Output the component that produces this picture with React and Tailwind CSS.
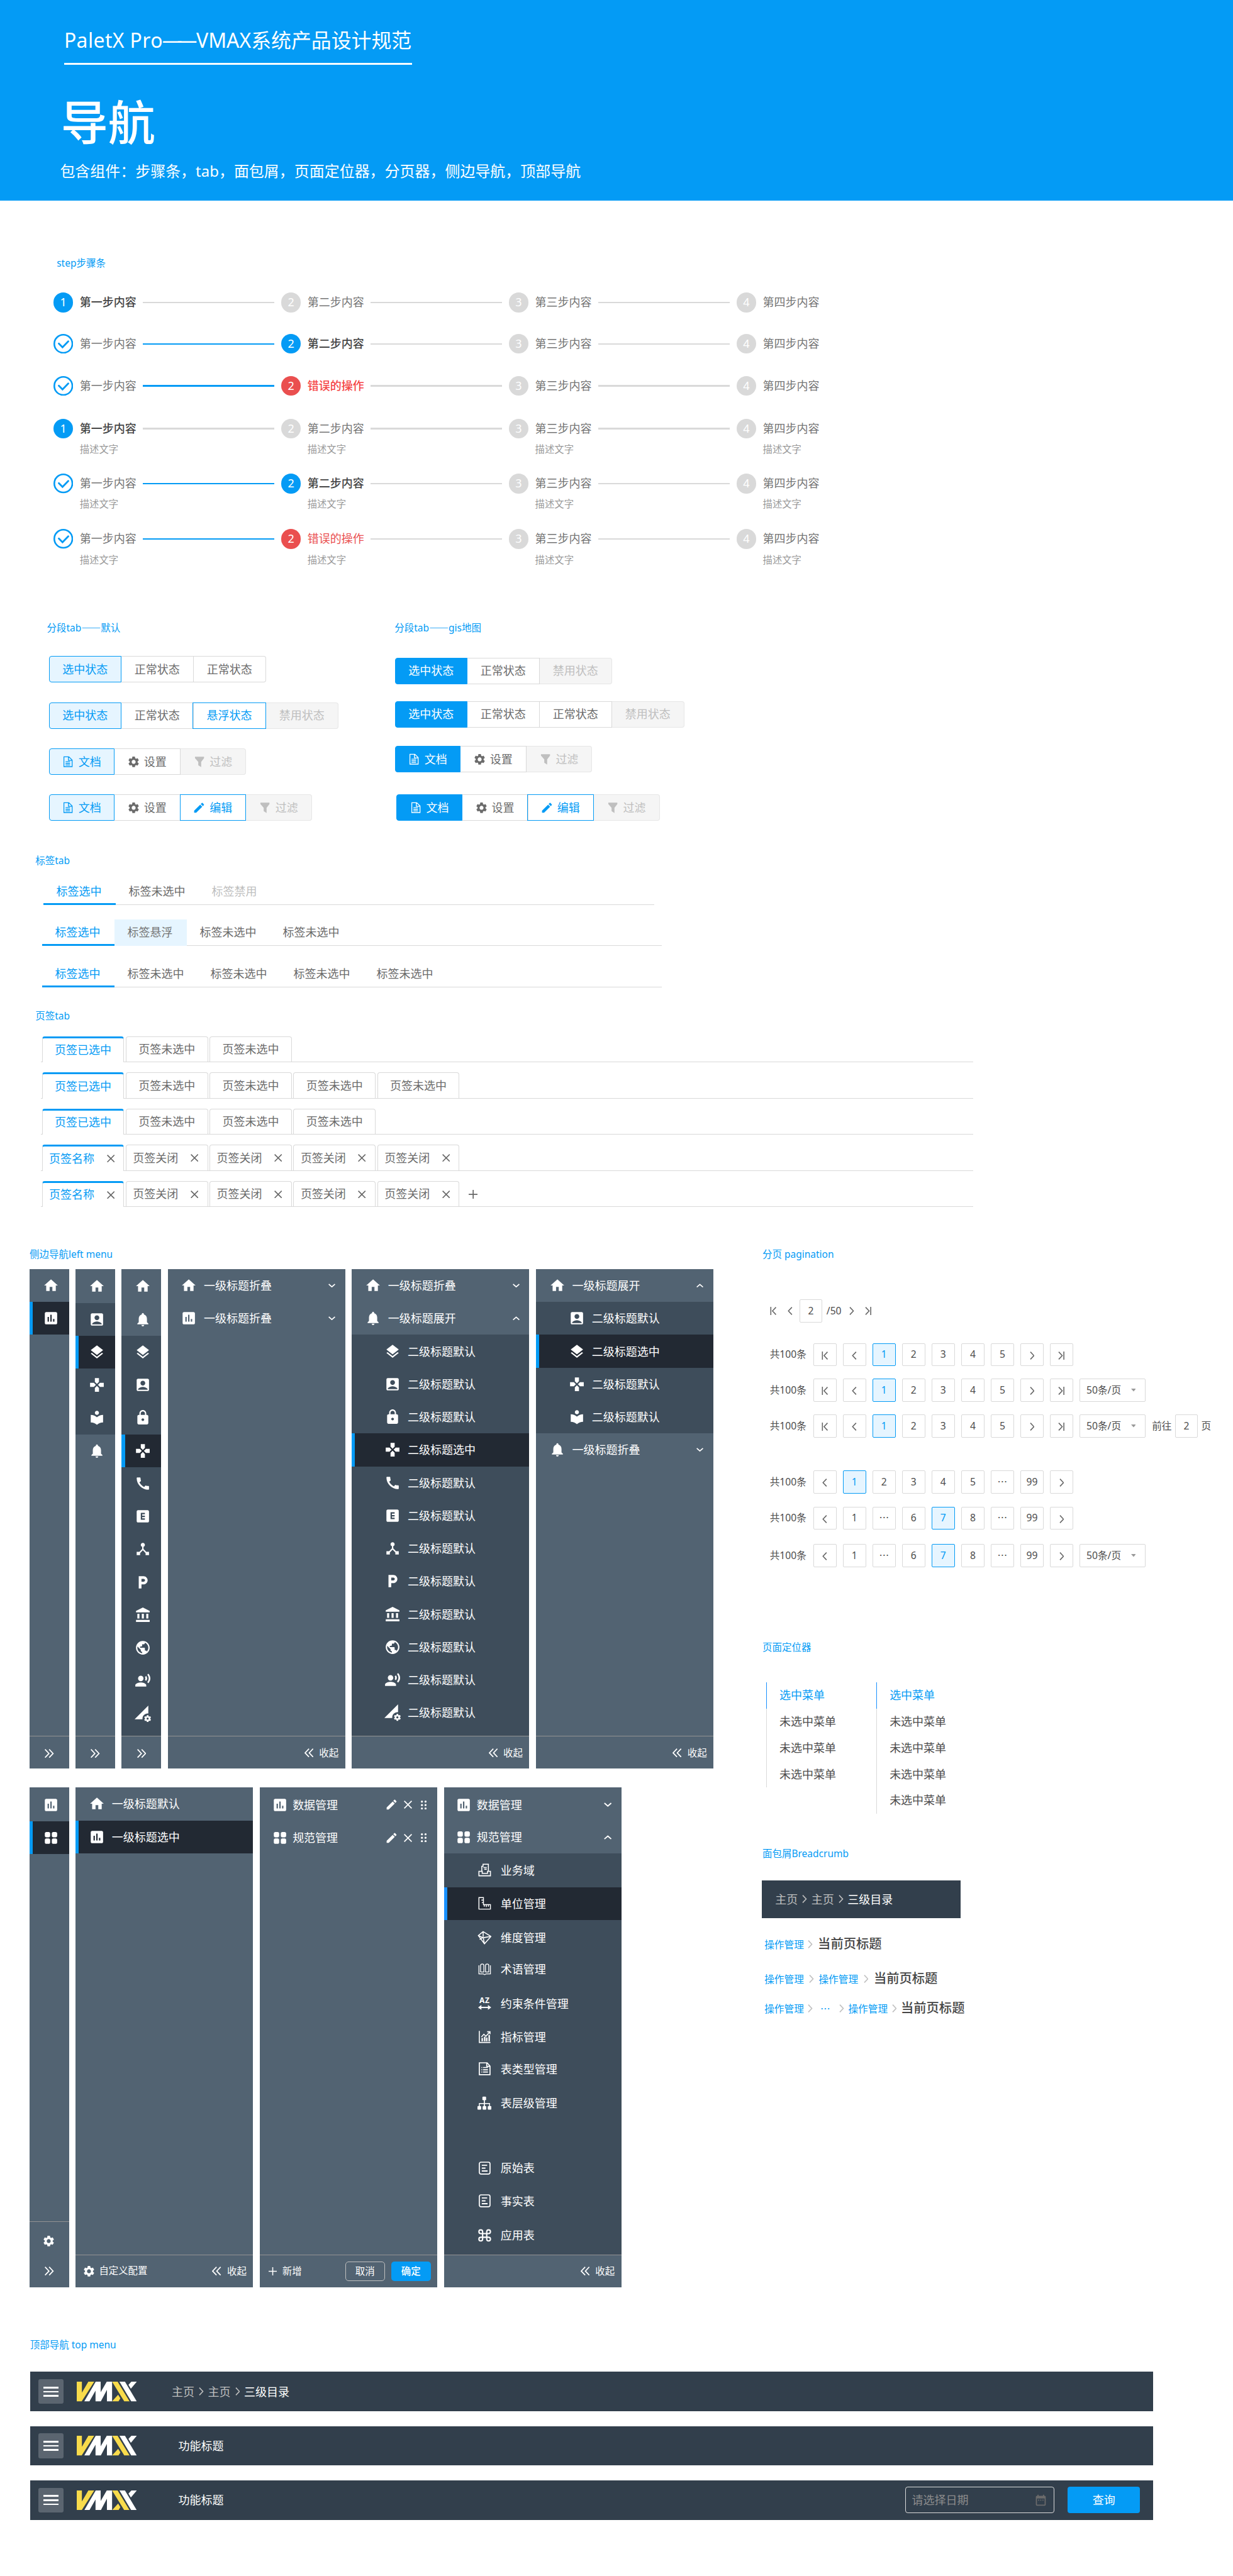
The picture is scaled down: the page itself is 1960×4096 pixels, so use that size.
import React from "react";
import {
  MdHome, MdInsertChart, MdAccountBox, MdNotifications, MdLayers, MdGamepad, MdLocalLibrary,
  MdLock, MdCall, MdExplicit, MdDeviceHub, MdLocalParking, MdAccountBalance, MdPublic,
  MdRecordVoiceOver, MdPermDataSetting, MdSettings, MdEdit, MdDateRange,
} from "react-icons/md";

/* ---------- small line icons ---------- */
const stroke = { fill: "none", stroke: "currentColor", strokeLinecap: "butt", strokeLinejoin: "miter" };

const Svg = ({ className, box = "0 0 32 32", sw = 2.4, children }) => (
  <svg viewBox={box} className={"shrink-0 " + className} {...stroke} strokeWidth={sw}>{children}</svg>
);

const Check = () => (
  <Svg className="size-48" box="0 0 48 48" sw={4}>
    <circle cx="24" cy="24" r="22" />
    <path d="M13 23.5l9 9L36 18" strokeWidth="4.4" strokeLinecap="round" />
  </Svg>
);
const ChevDown = ({ className = "h-10 w-17" }) => <Svg className={className} box="0 0 17 10" sw={2.6}><path d="M1 1.5l7.5 6.5L16 1.5" /></Svg>;
const ChevUp = ({ className = "h-10 w-17" }) => <Svg className={className} box="0 0 17 10" sw={2.6}><path d="M1 8.5L8.500 2 16 8.5" /></Svg>;
const Close = ({ className = "size-20" }) => <Svg className={className} box="0 0 20 20" sw={2.6}><path d="M1 1l18 18M19 1L1 19" /></Svg>;
const Plus = ({ className = "size-22" }) => <Svg className={className} box="0 0 22 22" sw={2.6}><path d="M11 0v22M0 11h22" /></Svg>;
const DblRight = () => <Svg className="size-22" box="0 0 22 22" sw={2.6}><path d="M1 1l9.500 10L1 21M11 1l9.500 10L11 21" /></Svg>;
const DblLeft = () => <Svg className="size-22" box="0 0 22 22" sw={2.6}><path d="M11 1L1.500 11 11 21M21 1l-9.500 10L21 21" /></Svg>;
const Right = ({ className = "h-20 w-12" }) => <Svg className={className} box="0 0 12 20" sw={2.4}><path d="M1.500 1l8.500 9-8.500 9" /></Svg>;
const Left = ({ className = "h-20 w-12" }) => <Svg className={className} box="0 0 12 20" sw={2.4}><path d="M10.500 1L2 10l8.500 9" /></Svg>;
const First = () => <Svg className="h-20 w-16" box="0 0 16 20" sw={2.4}><path d="M2 0v20M14.500 1L6 10l8.500 9" /></Svg>;
const Last = () => <Svg className="h-20 w-16" box="0 0 16 20" sw={2.4}><path d="M14 0v20M1.500 1L10 10l-8.500 9" /></Svg>;
const Doc = () => (
  <Svg className="size-28" box="0 0 28 28" sw={2}>
    <path d="M4 2h12l8 8v16H4zM15 2v9h9M8 14h11M8 18h11M8 22h11" />
  </Svg>
);
const Funnel = () => (
  <svg viewBox="0 0 28 28" className="size-28 shrink-0" fill="currentColor"><path d="M3 2h22v3.500l-7 9V27l-7-4.500v-8l-8-9z" /></svg>
);
const Gear = () => <MdSettings className="size-32 -mx-2 shrink-0" />;
const Pencil = () => <MdEdit className="size-32 -mx-2 shrink-0" />;
const Grid4 = ({ className = "" }) => (
  <svg viewBox="0 0 40 40" className={"size-40 shrink-0 " + className} fill="currentColor">
    <rect x="5" y="6" width="13" height="13" rx="4" /><rect x="22" y="6" width="13" height="13" rx="4" />
    <rect x="5" y="22" width="13" height="13" rx="4" /><rect x="22" y="22" width="13" height="13" rx="4" />
  </svg>
);
const Dots6 = () => (
  <svg viewBox="0 0 14 22" className="h-22 w-14 shrink-0" fill="currentColor">
    {[2.5, 11, 19.5].map((y) => [2.6, 11.400].map((x) => <circle key={x + "-" + y} cx={x} cy={y} r="2.500" />))}
  </svg>
);

/* second-level icons of the data menu */
const Tray = () => <Svg className="size-32" box="0 0 32 32"><path d="M9 19V7h3V2h13v17M13 10h8M15 14h6M2 19h8v5h13v-5h7v11H2z" /></Svg>;
const Ruler = () => <Svg className="size-32"><path d="M2 2h11v17h17v11H2zM8 8h5M9 14h4M15 24v-4M20 25v-5M25 24v-5" strokeWidth="2.200" /></Svg>;
const Gem = () => <Svg className="size-34" sw={2.2}><path d="M13 2L2 11l14 19L31 13zM13 2v12M2 11l11 5 18-3M13 15l3 15M5 20l8-5" /></Svg>;
const Book = () => <Svg className="size-32" sw={2}><path d="M6 23V7c0-2 1.500-4 4-4s4 2 4 4v16M18 23V7c0-2 1.500-4 4-4s4 2 4 4v16M6 22.500h8M18 22.500h8M2 6v21h10.500c2 0 2 2 3.500 2s1.500-2 3.500-2H30V6" /></Svg>;
const AZ = () => (
  <span className="flex w-34 shrink-0 flex-col items-center">
    <span className="text-[12px] leading-16 font-bold tracking-[0.5px]">AZ</span>
    <Svg className="mt-3 h-12 w-32" box="0 0 32 12" sw={3}><path d="M5 6h22" /><path d="M8 0L0 6l8 6zM24 0l8 6-8 6z" fill="currentColor" stroke="none" /></Svg>
  </span>
);
const Stats = () => <Svg className="size-32"><path d="M3 2v28h27M8 17l6-7 5 5 9-10M22 4h7v6" /><path d="M10 19v8M16 16v11M21 18v9M27 12v15" strokeWidth="3.600" /></Svg>;
const Sheet = () => <Svg className="size-32" sw={2.6}><path d="M3 1.500h19l7 8v21H3zM21 2v8h8M8 13h2M12 13h12M8 18.500h2M12 18.500h12M8 24h2M12 24h12" /></Svg>;
const Tree = () => (
  <svg viewBox="0 0 34 32" className="size-34 shrink-0" fill="currentColor">
    <rect x="12" y="0" width="9" height="9" rx="2" /><rect x="0" y="23" width="9" height="9" rx="2" />
    <rect x="12.500" y="23" width="9" height="9" rx="2" /><rect x="25" y="23" width="9" height="9" rx="2" />
    <path d="M15.500 8h2.600v16h-2.600zM3.500 16h27v8h-2.200v-6H5.700v6H3.500z" />
  </svg>
);
const Note = () => <Svg className="size-32" sw={2.6}><rect x="3" y="1.500" width="26" height="29" rx="4" /><path d="M9 9h13M9 16h9M9 23h14" strokeWidth="3" /></Svg>;
const Cmd = () => <Svg className="size-32" sw={3.2}><path d="M11 7a4.500 4.500 0 1 0-4.500 4.500h19A4.500 4.500 0 1 0 21 7v18a4.500 4.500 0 1 0 4.500-4.500h-19A4.500 4.500 0 1 0 11 25z" /></Svg>;

/* ---------- shared pieces ---------- */
const Label = ({ className, children }) => (
  <div className={"h-36 text-[15.500px] leading-36 whitespace-pre text-[#049bf5] " + className}>{children}</div>
);
const Dash = () => <span className="font-['Noto_Sans_CJK_SC']">——</span>;

/* ---------- steps ---------- */
const NAMES = ["第一步内容", "第二步内容", "第三步内容", "第四步内容"];

function Steps({ className, active, error, light, desc }) {
  return (
    <div className={"flex pl-130 " + className}>
      {NAMES.map((name, i) => {
        const done = i < active;
        const on = i === active;
        const bad = on && error;
        const circle = bad ? "bg-[#ea4f4f]" : on ? "bg-[#049bf5]" : "bg-[#d9d9d9]";
        const text = bad
          ? light ? "text-[#ea4f4f]" : "text-[#f54545] font-medium"
          : on ? "text-[#454545] font-medium" : "text-[#757575]";
        return (
          <div key={name} className="w-554 shrink-0">
            <div className="flex h-48 items-center">
              {done ? (
                <span className="text-[#049bf5]"><Check /></span>
              ) : (
                <span className={"flex size-48 items-center justify-center rounded-full text-[18px] leading-48 text-white " + circle}>{i + 1}</span>
              )}
              <span className={"ml-16 w-154 text-[18px] leading-48 whitespace-nowrap " + text}>{bad ? "错误的操作" : name}</span>
              {i < 3 && <span className={"h-4 w-320 " + (done ? "bg-[#049bf5]" : "bg-[#d9d9d9]")} />}
            </div>
            {desc && <div className="mt-9 ml-64 text-[15.350px] leading-36 text-[#999]">描述文字</div>}
          </div>
        );
      })}
    </div>
  );
}

/* ---------- segmented tabs ---------- */
const CELL = {
  on: "border-[#049bf5] bg-[#e6f5ff] text-[#049bf5] border",
  solid: "border-[#049bf5] bg-[#049bf5] text-white border",
  normal: "border-[#d9d9d9] text-[#6b6b6b] border-y border-r",
  hover: "border-[#049bf5] text-[#049bf5] border",
  off: "border-[#e6e6e6] bg-[#f5f5f5] text-[#bfbfbf] border-y border-r",
};
function Segments({ className, cells }) {
  return (
    <div className={"flex h-64 " + className}>
      {cells.map(([kind, text, Icon], i) => (
        <div
          key={i}
          className={
            "flex h-64 items-center justify-center text-[18px] leading-60 whitespace-nowrap first:rounded-l-[4px] last:rounded-r-[4px] " +
            (Icon ? (kind === "hover" ? "-ml-2 w-162 gap-11 " : "w-160 gap-11 ") : kind === "hover" ? "-ml-2 w-178 " : "w-176 ") +
            CELL[kind]
          }
        >
          {Icon && <Icon />}
          <span>{text}</span>
        </div>
      ))}
    </div>
  );
}

/* ---------- label tabs ---------- */
function LabelTabs({ className, items }) {
  return (
    <div className={"flex h-64 border-b border-[#d9d9d9] " + className}>
      {items.map(([text, kind], i) => (
        <div
          key={i}
          className={
            "box-border h-64 shrink-0 pl-32 text-[18px] leading-64 whitespace-nowrap " +
            (text.length === 4 ? "w-176 " : "w-202 ") +
            (kind === "on" ? "border-b-[3px] border-[#049bf5] text-[#049bf5]" : kind === "hover" ? "bg-[#e6f5ff] text-[#757575]" : kind === "off" ? "text-[#bfbfbf]" : "text-[#6b6b6b]")
          }
        >
          {text}
        </div>
      ))}
    </div>
  );
}

/* ---------- page tabs ---------- */
function PageTabs({ className, count, closable, add }) {
  return (
    <div className={"ml-100 flex h-64 w-2268 gap-4 border-b border-[#d9d9d9] pl-2 " + className}>
      {Array.from({ length: count }, (_, i) => (
        <div
          key={i}
          className={
            "flex w-200 shrink-0 items-center rounded-t-[4px] border border-b-0 border-[#d9d9d9] text-[18px] leading-60 whitespace-nowrap " +
            (i === 0 ? "h-64 border-t-[3px] border-t-[#049bf5] bg-white text-[#049bf5] " : "h-62 pt-2 text-[#6b6b6b] ") +
            (closable ? "justify-between pr-22 pl-16" : "justify-center")
          }
        >
          <span>{closable ? (i === 0 ? "页签名称" : "页签关闭") : i === 0 ? "页签已选中" : "页签未选中"}</span>
          {closable && <span className="text-[#666]"><Close className="size-19" /></span>}
        </div>
      ))}
      {add && <span className="ml-18 flex items-center pt-3 text-[#666]"><Plus /></span>}
    </div>
  );
}

/* ---------- side menus ---------- */
const BG = { top: "bg-[#526372]", sub: "bg-[#3e4d5b]", sel: "bg-[#222933]" };

function SideRow({ kind = "top", icon: Icon, text, sub, chev, className = "h-80" }) {
  return (
    <div className={"flex shrink-0 items-center " + className + " " + BG[kind]}>
      <span className={"h-full w-8 shrink-0 " + (kind === "sel" ? "bg-[#049bf5]" : "")} />
      <Icon className={"size-40 shrink-0 " + (sub ? "ml-72" : "ml-24")} />
      {text && <span className="ml-16 flex-1 text-[18px] leading-40 whitespace-nowrap">{text}</span>}
      {chev && <span className="mr-24">{chev === "up" ? <ChevUp /> : <ChevDown />}</span>}
    </div>
  );
}
function Side({ wide, children, footer, footClass = "h-80" }) {
  return (
    <div className={"flex h-1216 shrink-0 flex-col bg-[#526372] text-white " + (wide ? "w-432" : "w-96")}>
      <div className="flex min-h-0 flex-1 flex-col">{children}</div>
      <div className={"flex shrink-0 items-center border-t border-[#939393] " + footClass}>{footer}</div>
    </div>
  );
}
const Expand = () => <span className="ml-37 pt-4"><DblRight /></span>;
const Collapse = () => (
  <span className="mr-16 ml-auto flex items-center gap-14 text-[15.500px] leading-40"><DblLeft />收起</span>
);

const DEEP = [MdLayers, MdAccountBox, MdLock, MdGamepad, MdCall, MdExplicit, MdDeviceHub, MdLocalParking, MdAccountBalance, MdPublic, MdRecordVoiceOver, MdPermDataSetting];

const DATA_ITEMS = [
  ["h-82", "业务域", Tray],
  ["h-80", "单位管理", Ruler, true],
  ["h-86", "维度管理", Gem],
  ["h-68", "术语管理", Book],
  ["h-100", "约束条件管理", AZ],
  ["h-62", "指标管理", Stats],
  ["h-94", "表类型管理", Sheet],
  ["h-72", "表层级管理", Tree],
  ["mt-80 h-84", "原始表", Note],
  ["h-76", "事实表", Note],
  ["h-92", "应用表", Cmd],
];

/* ---------- pagination ---------- */
const GLYPH = { first: First, prev: Left, next: Right, last: Last };
function PageBox({ v, on }) {
  const G = GLYPH[v];
  return (
    <span
      className={
        "flex size-56 shrink-0 items-center justify-center rounded-[2px] border text-[15.68px] leading-50 " +
        (on ? "border-[#049bf5] bg-[#e6f5ff] text-[#049bf5]" : "border-[#d9d9d9] text-[#4d4d4d]")
      }
    >
      {G ? <span className="pt-4 text-[#666]"><G /></span> : v === "…" ? <span className="font-['Noto_Sans_CJK_SC']">…</span> : v}
    </span>
  );
}
function Pager({ className, items, on, size, jump }) {
  return (
    <div className={"flex h-56 items-center pl-18 text-[15.68px] leading-50 whitespace-nowrap text-[#4d4d4d] " + className}>
      <span className="w-106 shrink-0">共100条</span>
      <div className="flex gap-16">
        {items.map((v, i) => <PageBox key={i} v={v} on={v === on} />)}
        {size && (
          <span className="flex h-56 w-160 items-center justify-between rounded-[2px] border border-[#d9d9d9] pr-22 pl-15">
            50条/页
            <svg viewBox="0 0 12 7" className="h-7 w-12" fill="#999"><path d="M0 0h12L6 7z" /></svg>
          </span>
        )}
      </div>
      {jump && (
        <>
          <span className="mr-8 ml-16">前往</span>
          <PageBox v="2" />
          <span className="ml-8">页</span>
        </>
      )}
    </div>
  );
}

/* ---------- anchor list ---------- */
function Anchor({ count, className }) {
  return (
    <div className={"w-268 " + className}>
      {Array.from({ length: count }, (_, i) => (
        <div
          key={i}
          className={"h-64 border-l pl-31 text-[18px] leading-64 whitespace-nowrap " + (i === 0 ? "border-[#1890ff] text-[#049bf5]" : "border-[#d9d9d9] text-[#4d4d4d]")}
        >
          {i === 0 ? "选中菜单" : "未选中菜单"}
        </div>
      ))}
    </div>
  );
}

/* ---------- breadcrumbs ---------- */
function DarkCrumbs({ className = "" }) {
  return (
    <div className={"flex items-center text-[18px] leading-40 whitespace-nowrap text-[#bfbfbf] " + className}>
      <span className="w-56">主页</span>
      <span className="flex w-32 justify-center"><Right /></span>
      <span className="w-56">主页</span>
      <span className="flex w-32 justify-center"><Right /></span>
      <span className="text-white">三级目录</span>
    </div>
  );
}
const Link = ({ children }) => <span className="w-96 text-[#049bf5]">{children}</span>;
const Sep = ({ className }) => <span className={"flex justify-center text-[#bfbfbf] " + className}><Right className="h-20 w-12" /></span>;
const Title = ({ children }) => <span className="-mt-6 text-[20.300px] leading-40 font-medium text-[#454545]">{children}</span>;

/* ---------- top bars ---------- */
function Logo() {
  return (
    <svg viewBox="282 378 326 144" preserveAspectRatio="none" className="ml-32 h-48 w-146 shrink-0">
      <g fill="#f8db4b">
        <path d="M282 378h28v80l35-80h32L309 522h-27z" />
        <path d="M474 378h30l65 144h-29z" />
        <path d="M507 473l12 27-10 22h-35z" />
      </g>
      <g fill="#fff">
        <path d="M385 378h27v77l33-77h29v144h-28v-84l-33 84h-29v-78l-33 78h-28z" />
        <path d="M514 378h30l64 144h-30z" />
        <path d="M579 378h29l-32 52-13-29z" />
      </g>
    </svg>
  );
}
function TopBar({ className, children }) {
  return (
    <div className={"ml-74 flex h-96 w-2732 items-center bg-[#323f4c] pl-20 text-white " + className}>
      <span className="flex size-60 shrink-0 flex-col items-center justify-center gap-6 rounded-[3px] bg-[#5b6570]">
        <i className="h-4 w-36 bg-white" /><i className="h-4 w-36 bg-white" /><i className="h-4 w-36 bg-white" />
      </span>
      <Logo />
      {children}
    </div>
  );
}

export default function App() {
  return (
    <div lang="zh-CN" className="h-[4096px] w-[1960px] overflow-hidden bg-white font-['Noto_Sans','Noto_Sans_CJK_SC',sans-serif] [--spacing:0.653333px]">
      <header className="h-488 overflow-hidden bg-[#049bf5] text-white">
        <div className="mt-62 ml-156 h-96 w-847 border-b-[3px] border-white text-[31.9px] leading-70 whitespace-nowrap">
          <span className="tracking-[0.4px]">PaletX Pro</span><span className="mr-10 -ml-2 tracking-[-0.25em]">——</span>VMAX系统产品设计规范
        </div>
        <h1 className="mt-70 ml-148 h-140 text-[75px] leading-140 font-medium whitespace-nowrap">导航</h1>
        <p className="mt-18 ml-146 text-[23.97px] leading-60 whitespace-nowrap">包含组件：步骤条，tab，面包屑，页面定位器，分页器，侧边导航，顶部导航</p>
      </header>

      <Label className="mt-135 ml-138">step步骤条</Label>
      <Steps className="mt-53 h-48" active={0} />
      <Steps className="mt-53 h-48" active={1} />
      <Steps className="mt-54 h-48" active={1} error />
      <Steps className="mt-56 h-93" active={0} desc />
      <Steps className="mt-41 h-93" active={1} desc />
      <Steps className="mt-42 h-93" active={1} error light desc />

      <div className="mt-128 flex h-489 pl-119">
        <div className="w-842 shrink-0">
          <Label className="-ml-5">分段tab<Dash />默认</Label>
          <Segments className="mt-52" cells={[["on", "选中状态"], ["normal", "正常状态"], ["normal", "正常状态"]]} />
          <Segments className="mt-49" cells={[["on", "选中状态"], ["normal", "正常状态"], ["hover", "悬浮状态"], ["off", "禁用状态"]]} />
          <Segments className="mt-48" cells={[["on", "文档", Doc], ["normal", "设置", Gear], ["off", "过滤", Funnel]]} />
          <Segments className="mt-48" cells={[["on", "文档", Doc], ["normal", "设置", Gear], ["hover", "编辑", Pencil], ["off", "过滤", Funnel]]} />
        </div>
        <div>
          <Label className="-ml-1">分段tab<Dash />gis地图</Label>
          <Segments className="mt-56" cells={[["solid", "选中状态"], ["normal", "正常状态"], ["off", "禁用状态"]]} />
          <Segments className="mt-42" cells={[["solid", "选中状态"], ["normal", "正常状态"], ["normal", "正常状态"], ["off", "禁用状态"]]} />
          <Segments className="mt-45" cells={[["solid", "文档", Doc], ["normal", "设置", Gear], ["off", "过滤", Funnel]]} />
          <Segments className="mt-54 ml-4" cells={[["solid", "文档", Doc], ["normal", "设置", Gear], ["hover", "编辑", Pencil], ["off", "过滤", Funnel]]} />
        </div>
      </div>

      <Label className="mt-79 ml-86">标签tab</Label>
      <LabelTabs className="mt-26 ml-105 w-1487" items={[["标签选中", "on"], ["标签未选中"], ["标签禁用", "off"]]} />
      <LabelTabs className="mt-35 ml-102 w-1508" items={[["标签选中", "on"], ["标签悬浮", "hover"], ["标签未选中"], ["标签未选中"]]} />
      <LabelTabs className="mt-37 ml-102 w-1508" items={[["标签选中", "on"], ["标签未选中"], ["标签未选中"], ["标签未选中"], ["标签未选中"]]} />

      <Label className="mt-53 ml-86">页签tab</Label>
      <PageTabs className="mt-30" count={3} />
      <PageTabs className="mt-24" count={5} />
      <PageTabs className="mt-24" count={4} />
      <PageTabs className="mt-24" count={5} closable />
      <PageTabs className="mt-24" count={5} closable add />

      <div className="mt-97 flex h-2532 pl-72">
        <div className="w-1783 shrink-0">
          <Label>侧边导航left menu</Label>
          <div className="mt-18 flex gap-16">
            <Side footer={<Expand />}>
              <SideRow icon={MdHome} />
              <SideRow icon={MdInsertChart} kind="sel" />
            </Side>
            <Side footer={<Expand />}>
              <SideRow icon={MdHome} className="h-82 pt-2" />
              <SideRow icon={MdAccountBox} kind="sub" />
              <SideRow icon={MdLayers} kind="sel" />
              <SideRow icon={MdGamepad} kind="sub" />
              <SideRow icon={MdLocalLibrary} kind="sub" />
              <SideRow icon={MdNotifications} />
            </Side>
            <Side footer={<Expand />}>
              <SideRow icon={MdHome} className="h-82 pt-2" />
              <SideRow icon={MdNotifications} />
              <div className="flex-1 bg-[#3e4d5b]">
                {DEEP.map((icon, i) => <SideRow key={i} icon={icon} kind={i === 3 ? "sel" : "sub"} />)}
              </div>
            </Side>
            <Side wide footer={<Collapse />}>
              <SideRow icon={MdHome} text="一级标题折叠" chev="down" />
              <SideRow icon={MdInsertChart} text="一级标题折叠" chev="down" />
            </Side>
            <Side wide footer={<Collapse />}>
              <SideRow icon={MdHome} text="一级标题折叠" chev="down" />
              <SideRow icon={MdNotifications} text="一级标题展开" chev="up" />
              <div className="flex-1 bg-[#3e4d5b]">
                {DEEP.map((icon, i) => (
                  <SideRow key={i} sub icon={icon} text={i === 3 ? "二级标题选中" : "二级标题默认"} kind={i === 3 ? "sel" : "sub"} />
                ))}
              </div>
            </Side>
            <Side wide footer={<Collapse />}>
              <SideRow icon={MdHome} text="一级标题展开" chev="up" />
              <SideRow sub icon={MdAccountBox} text="二级标题默认" kind="sub" />
              <SideRow sub icon={MdLayers} text="二级标题选中" kind="sel" />
              <SideRow sub icon={MdGamepad} text="二级标题默认" kind="sub" />
              <SideRow sub icon={MdLocalLibrary} text="二级标题默认" kind="sub" />
              <SideRow icon={MdNotifications} text="一级标题折叠" chev="down" />
            </Side>
          </div>

          <div className="mt-46 flex gap-16">
            <Side
              footClass="h-160 flex-col"
              footer={
                <>
                  <MdSettings className="mt-30 mr-4 size-32" />
                  <span className="mt-46"><DblRight /></span>
                </>
              }
            >
              <SideRow icon={MdInsertChart} className="h-82 pt-4" />
              <SideRow icon={Grid4} kind="sel" />
            </Side>
            <Side
              wide
              footer={
                <>
                  <span className="ml-16 flex items-center gap-9 text-[15.400px] leading-40"><MdSettings className="size-32" />自定义配置</span>
                  <Collapse />
                </>
              }
            >
              <SideRow icon={MdHome} text="一级标题默认" />
              <SideRow icon={MdInsertChart} text="一级标题选中" kind="sel" />
            </Side>
            <Side
              wide
              footer={
                <div className="flex w-full items-center text-[15.500px] leading-40">
                  <span className="ml-21 flex items-center gap-14"><Plus className="size-20" />新增</span>
                  <span className="ml-auto flex h-48 w-96 items-center justify-center rounded-[5px] border border-[#bfbfbf]">取消</span>
                  <span className="mr-16 ml-16 flex h-48 w-96 items-center justify-center rounded-[5px] bg-[#049bf5] font-medium">确定</span>
                </div>
              }
            >
              {[["数据管理", MdInsertChart], ["规范管理", Grid4]].map(([t, Icon]) => (
                <div key={t} className="flex h-80 items-center pt-4 pl-29">
                  <Icon className="size-40 shrink-0" />
                  <span className="ml-11 flex-1 text-[18px] leading-40">{t}</span>
                  <MdEdit className="size-32" />
                  <Close className="mr-24 ml-14 size-20" />
                  <span className="-ml-2 mr-26"><Dots6 /></span>
                </div>
              ))}
            </Side>
            <Side
              wide
              footer={<Collapse />}
            >
              <div className="flex h-82 items-center pt-2 pl-28">
                <MdInsertChart className="size-40" />
                <span className="ml-12 flex-1 text-[18px] leading-40">数据管理</span>
                <span className="mr-24"><ChevDown className="h-11 w-19" /></span>
              </div>
              <div className="flex h-78 items-center pl-28">
                <Grid4 />
                <span className="ml-12 flex-1 text-[18px] leading-40">规范管理</span>
                <span className="mr-24"><ChevUp className="h-11 w-19" /></span>
              </div>
              <div className="flex-1 bg-[#3e4d5b]">
                {DATA_ITEMS.map(([h, t, Icon, sel]) => (
                  <div key={t} className={"flex items-center " + h + (sel ? " bg-[#222933]" : "")}>
                    <span className={"h-full w-8 " + (sel ? "bg-[#1890ff]" : "")} />
                    <span className="ml-74 flex w-34 justify-center"><Icon /></span>
                    <span className="ml-22 text-[18px] leading-40 whitespace-nowrap">{t}</span>
                  </div>
                ))}
              </div>
            </Side>
          </div>
        </div>

        <div className="w-1130 shrink-0">
          <Label>分页 pagination</Label>
          <div className="mt-92 flex h-56 items-center pl-19 text-[15.68px] leading-50 text-[#4d4d4d]">
            <span className="text-[#666]"><First /></span>
            <span className="ml-26 text-[#666]"><Left /></span>
            <span className="ml-17"><PageBox v="2" /></span>
            <span className="ml-10 w-54">/50</span>
            <span className="ml-1 text-[#666]"><Right /></span>
            <span className="ml-27 text-[#666]"><Last /></span>
          </div>
          <Pager className="mt-50" on="1" items={["first", "prev", "1", "2", "3", "4", "5", "next", "last"]} />
          <Pager className="mt-31" on="1" size items={["first", "prev", "1", "2", "3", "4", "5", "next", "last"]} />
          <Pager className="mt-31" on="1" size jump items={["first", "prev", "1", "2", "3", "4", "5", "next", "last"]} />
          <Pager className="mt-80" on="1" items={["prev", "1", "2", "3", "4", "5", "…", "99", "next"]} />
          <Pager className="mt-32" on="7" items={["prev", "1", "…", "6", "7", "8", "…", "99", "next"]} />
          <Pager className="mt-35" on="7" size items={["prev", "1", "…", "6", "7", "8", "…", "99", "next"]} />

          <Label className="mt-178">页面定位器</Label>
          <div className="mt-67 flex h-320 pl-9">
            <Anchor count={4} />
            <Anchor count={5} />
          </div>

          <Label className="mt-80">面包屑Breadcrumb</Label>
          <div className="mt-46 -ml-1 flex h-92 w-484 items-center bg-[#323f4c] pl-32"><DarkCrumbs /></div>
          <div className="mt-44 ml-5 flex h-40 items-center text-[15.68px] leading-40 whitespace-nowrap">
            <Link>操作管理</Link><Sep className="ml-10 w-12" /><span className="w-12" /><Title>当前页标题</Title>
          </div>
          <div className="mt-44 ml-5 flex h-40 items-center text-[15.68px] leading-40 whitespace-nowrap">
            <Link>操作管理</Link><Sep className="w-36" /><Link>操作管理</Link><Sep className="w-38" /><Title>当前页标题</Title>
          </div>
          <div className="mt-32 ml-5 flex h-40 items-center text-[15.68px] leading-40 whitespace-nowrap">
            <Link>操作管理</Link><Sep className="ml-10 w-12" />
            <span className="mx-18 w-24 font-['Noto_Sans_CJK_SC'] text-[#049bf5]">…</span>
            <Sep className="ml-4 w-12" /><span className="w-10" /><Link>操作管理</Link><Sep className="ml-10 w-12" /><span className="w-10" /><Title>当前页标题</Title>
          </div>
        </div>
      </div>

      <Label className="mt-122 ml-73">顶部导航 top menu</Label>
      <TopBar className="mt-48"><DarkCrumbs className="ml-86" /></TopBar>
      <TopBar className="mt-36"><span className="ml-102 text-[18px] leading-40">功能标题</span></TopBar>
      <TopBar className="mt-36">
        <span className="ml-102 text-[18px] leading-40">功能标题</span>
        <span className="ml-auto flex h-64 w-364 items-center justify-between rounded-[4px] border border-[#d9d9d9] pr-16 pl-15 text-[18px] leading-40 text-[#8c8c8c]">
          请选择日期
          <MdDateRange className="size-32 text-[#6b6b6b]" />
        </span>
        <span className="mr-32 ml-32 flex h-64 w-176 items-center justify-center rounded-[4px] bg-[#049bf5] text-[18px] leading-40">查询</span>
      </TopBar>
    </div>
  );
}
